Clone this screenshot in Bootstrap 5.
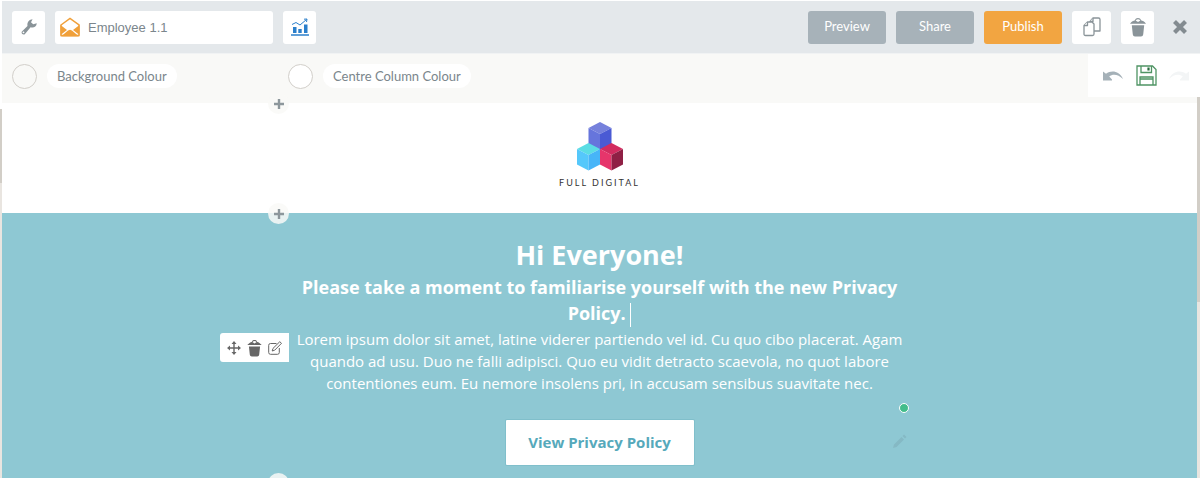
<!DOCTYPE html>
<html lang="en">
<head>
<meta charset="utf-8">
<meta name="viewport" content="width=device-width, initial-scale=1">
<title>Employee 1.1 – Email editor</title>
<link href="https://cdn.jsdelivr.net/npm/bootstrap@5.3.0/dist/css/bootstrap.min.css" rel="stylesheet">
<style>
  body { font-family: "Open Sans", "Noto Sans", sans-serif; font-size: 13px; color: #7b868c; }
  svg { display: block; }
  .editor { padding: 1px 0 0 2px; }
  .topbar { background: #e4e8eb; height: 53px; padding: 0 12px 0 10px; border-bottom: 1px solid #f1f3f4; }
  .bar-group { gap: 10px; }
  .tile { width: 33px; height: 33px; padding: 0; background: #fff; border: 0; border-radius: 3px; color: #8a9499; display: flex; align-items: center; justify-content: center; }
  .tile-wide { width: 39px; }
  .tile:hover { background: #f6f8f9; }
  .name-box { width: 218px; height: 33px; background: #fff; border-radius: 3px; padding: 0 5px; }
  .name-box input { font: 13px "Liberation Sans", Arial, sans-serif; color: #7b868c; min-height: 0; padding: 0; margin-left: 8px; }
  .action { width: 78px; height: 33px; padding: 0; font-family: Lato, sans-serif; font-size: 13px; color: #fff; background: #a7b2b9; border: 0; border-radius: 3px; }
  .action:hover { color: #fff; background: #98a4ac; }
  .action-main, .action-main:hover { background: #f2a541; }
  .close-x { width: 16px; height: 16px; padding: 0; color: #838b90; }
  .options { background: #f9f9f7; height: 49px; padding-left: 10px; }
  .options-picks { padding-bottom: 5px; }
  .option { width: 276px; gap: 10px; }
  .swatch { width: 25px; height: 25px; border: 1px solid #d2cfca; border-radius: 50%; padding: 0; background: #f9f9f7; flex: none; }
  .swatch-centre { background: #fff; }
  .pill { height: 24px; line-height: 24px; padding: 0 10px; border-radius: 12px; background: #fff; font-family: Lato, sans-serif; font-size: 13px; }
  .history { width: 112px; height: 43px; background: #fff; padding: 0 11px 0 15px; }
  .canvas { padding-right: 3px; min-height: 0; }
  .rail { background: #e9e5e0; position: absolute; width: 3px; right: 0; top: 97px; bottom: 0; }
  .rail::before { content: ""; display: block; height: 205px; background: #d2cec7; }
  .rail-left { left: 0; right: auto; width: 2px; top: 109px; }
  .rail-left::before { height: 74px; }
  .centre-col { width: 100%; max-width: 621px; padding: 0 6px; margin: 0 auto; position: relative; text-align: center; }
  .add { position: absolute; left: -21px; top: -10px; width: 21px; height: 21px; padding: 0; border: 0; border-radius: 50%; background: rgba(249,249,247,.85); color: #8d979c; display: flex; align-items: center; justify-content: center; z-index: 2; }
  .add-end { top: auto; bottom: -11px; }
  .logo-block { height: 110px; padding-top: 19px; }
  .brand-name { font: 9px/12px Lato, sans-serif; letter-spacing: 2px; color: #333; margin-top: 6px; }
  .hero { background: #8ec8d3; color: #fff; }
  .hero .centre-col { padding-top: 23px; padding-bottom: 18px; }
  .hero h1 { font-size: 27px; line-height: 38px; font-weight: 700; margin: 0; }
  .hero h2 { font-size: 18px; line-height: 26px; font-weight: 700; margin: 0; }
  .hero p { font-size: 15px; line-height: 22px; margin: 0 0 26px; padding-top: 1px; }
  .caret { display: inline-block; width: 1px; height: 24px; background: #fff; vertical-align: middle; }
  .cta { width: 188px; height: 45px; line-height: 45px; padding: 0; background: #fff; color: #56a9bb; border: 0; border-radius: 1px; font-size: 15px; font-weight: 700; box-shadow: 0 0 0 1px #80bfcb; }
  .block-tools { position: absolute; right: 100%; top: 120px; width: 69px; height: 29px; background: #fff; border-radius: 3px 0 0 3px; color: #666; padding: 0 7px; }
  .block-tools button { padding: 0; border: 0; background: none; color: inherit; }
  .handle { position: absolute; right: 1px; top: 190px; width: 10px; height: 10px; border: 1px solid #fff; border-radius: 50%; background: #43bd8b; }
  .ghost-pencil { position: absolute; right: 2px; top: 220px; color: #85b9c4; }
</style>
</head>
<body>
<svg width="0" height="0" class="position-absolute" aria-hidden="true">
  <symbol id="bin" viewBox="0 0 16 20">
    <path d="M0 6.800C1.500 4.500 3.500 3.600 5 3.200 5.500.300 10.500.300 11 3.200 12.500 3.600 14.500 4.500 16 6.800Z" fill="currentColor"/>
    <path d="M5.600 3.400Q8 .9 10.400 3.400L8 5Z" fill="#fff"/>
    <path d="M1.800 8.300H14.200L13.200 17.500Q13 19.500 11 19.500H5Q3 19.500 2.800 17.500Z" fill="currentColor"/>
  </symbol>
  <symbol id="plus" viewBox="0 0 10 10"><path d="M5 0V10M0 5H10" stroke="currentColor" stroke-width="2.400"/></symbol>
</svg>

<div class="editor vh-100 overflow-hidden d-flex flex-column position-relative bg-white">
  <header class="topbar d-flex align-items-center justify-content-between flex-shrink-0">
    <div class="bar-group d-flex align-items-center">
      <button type="button" class="tile" aria-label="Settings">
        <svg width="16" height="16" viewBox="0 0 16 16"><path fill="currentColor" fill-rule="evenodd" d="M15.800 4.200C15.400 7.800 12.500 9.300 9.600 8.300L4 15C2.500 16.600-.4 14.500.9 12.600L6.500 6.900C5.800 3.500 8 .500 11.600.200L10 3.200 12.200 5.300ZM2.500 12.400A.9.9 0 1 0 2.500 14.200.9.9 0 0 0 2.500 12.400Z"/></svg>
      </button>
      <div class="name-box d-flex align-items-center">
        <svg width="20" height="20" viewBox="0 0 20 20" class="flex-shrink-0"><path d="M1 8L10 1.500 19 8V18.500H1Z" fill="#fff" stroke="#f0a03a" stroke-width="1.500"/><path d="M.5 8L7 13 .5 18ZM19.500 8L13 13 19.500 18ZM1 19.500L8 13.500 10 12.700 12 13.500 19 19.500Z" fill="#f0a03a"/></svg>
        <input type="text" class="form-control border-0 shadow-none" value="Employee 1.1" aria-label="Document name">
      </div>
      <button type="button" class="tile" aria-label="Statistics">
        <svg width="20" height="18" viewBox="0 0 20 18"><path d="M1 17H19" stroke="#2b7fcb" stroke-width="1.500"/><path d="M3 9H6.500V15H3ZM8.300 11H11.700V15H8.300ZM14 6.500H17.500V15H14Z" fill="#2b7fcb"/><path d="M2 6.500L6 4.500 10 7 16.500 1.500M14 1.200L17 1 16.500 4" fill="none" stroke="#2b7fcb" stroke-width="1"/></svg>
      </button>
    </div>
    <div class="bar-group d-flex align-items-center">
      <button type="button" class="btn action">Preview</button>
      <button type="button" class="btn action">Share</button>
      <button type="button" class="btn action action-main">Publish</button>
      <button type="button" class="tile tile-wide" aria-label="Duplicate">
        <svg width="18" height="20" viewBox="0 0 18 20" fill="#fff" stroke="currentColor" stroke-width="1.300" stroke-linejoin="round"><path d="M7 4.500L10 1H15.500Q17 1 17 2.500V14H7Z"/><path d="M7 4.500H10V1"/><path d="M1 8.500L4.500 5H9L11 7V17Q11 18.500 9.500 18.500H2.500Q1 18.500 1 17Z"/><path d="M1 8.500H4.500V5"/></svg>
      </button>
      <button type="button" class="tile" aria-label="Delete"><svg width="16" height="20"><use href="#bin"/></svg></button>
      <button type="button" class="btn border-0 close-x ms-2" aria-label="Close">
        <svg width="16" height="16" viewBox="0 0 16 16"><path d="M2.500 2.500L13.500 13.500M13.500 2.500L2.500 13.500" stroke="currentColor" stroke-width="4.200"/></svg>
      </button>
    </div>
  </header>

  <div class="options d-flex flex-shrink-0 justify-content-between">
    <div class="options-picks d-flex align-items-center">
      <div class="option d-flex align-items-center">
        <button type="button" id="bg" class="swatch" aria-label="Choose background colour"></button>
        <label class="pill" for="bg">Background Colour</label>
      </div>
      <div class="option d-flex align-items-center">
        <button type="button" id="centre" class="swatch swatch-centre" aria-label="Choose centre column colour"></button>
        <label class="pill" for="centre">Centre Column Colour</label>
      </div>
    </div>
    <div class="history d-flex align-items-center justify-content-between">
      <button type="button" class="btn border-0 p-0" aria-label="Undo"><svg width="20" height="10" viewBox="0 0 20 10"><path d="M0 .5L3 2.700C8-.8 16-.8 20 8 15.500 3.500 10 2.500 6.200 5.500L9 8.500V9.500H0Z" fill="#a5b1b8"/></svg></button>
      <button type="button" class="btn border-0 p-0" aria-label="Save"><svg width="21" height="21" viewBox="0 0 21 21" fill="none" stroke="#4f9464" stroke-width="1.300"><path d="M1 1H16.500L20 4.500V20H1Z"/><path d="M5 1V7.500H15.500V1"/><path d="M4 20V12H17V20M4.500 14H16.500"/><path d="M12.500 2.500V5.500" stroke="#276b3d" stroke-width="2.200"/></svg></button>
      <button type="button" class="btn border-0 p-0" aria-label="Redo"><svg width="20" height="10" viewBox="0 0 20 10"><path d="M20 .5L17 2.700C12-.8 4-.8 0 8 4.500 3.500 10 2.500 13.800 5.500L11 8.500V9.500H20Z" fill="#f3f5f6"/></svg></button>
    </div>
  </div>

  <main class="canvas flex-grow-1">
    <section>
      <div class="centre-col logo-block">
        <button type="button" class="add" aria-label="Add block"><svg width="10" height="10"><use href="#plus"/></svg></button>
        <svg width="48" height="49" viewBox="0 0 48 49" class="mx-auto" role="img" aria-label="Full Digital logo">
          <path d="M24 0L35.500 6 24 12 12.500 6Z" fill="#7681dc"/><path d="M12.500 6L24 12V28L12.500 22Z" fill="#6675dc"/><path d="M35.500 6L24 12V28L35.500 22Z" fill="#4a5ad4"/>
          <path d="M12.500 21L24 27 12.500 33 1 27Z" fill="#5bdde4"/><path d="M1 27L12.500 33V48.500L1 42.500Z" fill="#55c8fb"/><path d="M24 27L12.500 33V48.500L24 42.500Z" fill="#47b5f8"/>
          <path d="M35.500 21L47 27 35.500 33 24 27Z" fill="#d22c60"/><path d="M24 27L35.500 33V48.500L24 42.500Z" fill="#e6356b"/><path d="M47 27L35.500 33V48.500L47 42.500Z" fill="#8f2045"/>
        </svg>
        <div class="brand-name">FULL DIGITAL</div>
      </div>
    </section>
    <section class="hero">
      <div class="centre-col">
        <button type="button" class="add" aria-label="Add block"><svg width="10" height="10"><use href="#plus"/></svg></button>
        <div class="block-tools d-flex align-items-center justify-content-between">
          <button type="button" aria-label="Move"><svg width="14" height="14" viewBox="0 0 14 14"><path d="M7 2V12M2 7H12" stroke="currentColor" stroke-width="1.400"/><path d="M7 0L9.500 3H4.500ZM7 14L4.500 11H9.500ZM0 7L3 4.500V9.500ZM14 7L11 9.500V4.500Z" fill="currentColor"/></svg></button>
          <button type="button" aria-label="Delete block"><svg width="15" height="18"><use href="#bin"/></svg></button>
          <button type="button" aria-label="Edit block"><svg width="14" height="14" viewBox="0 0 14 14" fill="none" stroke="currentColor"><path d="M8.500 2.500H2.500Q.7 2.500.7 4.300V11.500Q.7 13.300 2.500 13.300H9.500Q11.300 13.300 11.300 11.500V7"/><path d="M4.200 10L5 7.400 11.800.700 13.500 2.300 6.700 9.200Z"/></svg></button>
        </div>
        <h1>Hi Everyone!</h1>
        <h2>Please take a moment to familiarise yourself with the new Privacy Policy. <span class="caret"></span></h2>
        <p>Lorem ipsum dolor sit amet, latine viderer partiendo vel id. Cu quo cibo placerat. Agam quando ad usu. Duo ne falli adipisci. Quo eu vidit detracto scaevola, no quot labore contentiones eum. Eu nemore insolens pri, in accusam sensibus suavitate nec.</p>
        <div class="position-relative">
          <a href="#policy" class="btn cta">View Privacy Policy</a>
        </div>
        <span class="handle"></span>
        <svg class="ghost-pencil" width="16" height="16" viewBox="0 0 16 16"><path d="M1 15L2 11.500 9.500 4 12 6.500 4.500 14ZM10.500 3L12 1.500 14.500 4 13 5.500Z" fill="currentColor"/></svg>
        <button type="button" class="add add-end" aria-label="Add block"><svg width="10" height="10"><use href="#plus"/></svg></button>
      </div>
    </section>
  </main>
  <div class="rail rail-left"></div>
  <div class="rail"></div>
</div>
<script src="https://cdn.jsdelivr.net/npm/bootstrap@5.3.0/dist/js/bootstrap.bundle.min.js"></script>
</body>
</html>
